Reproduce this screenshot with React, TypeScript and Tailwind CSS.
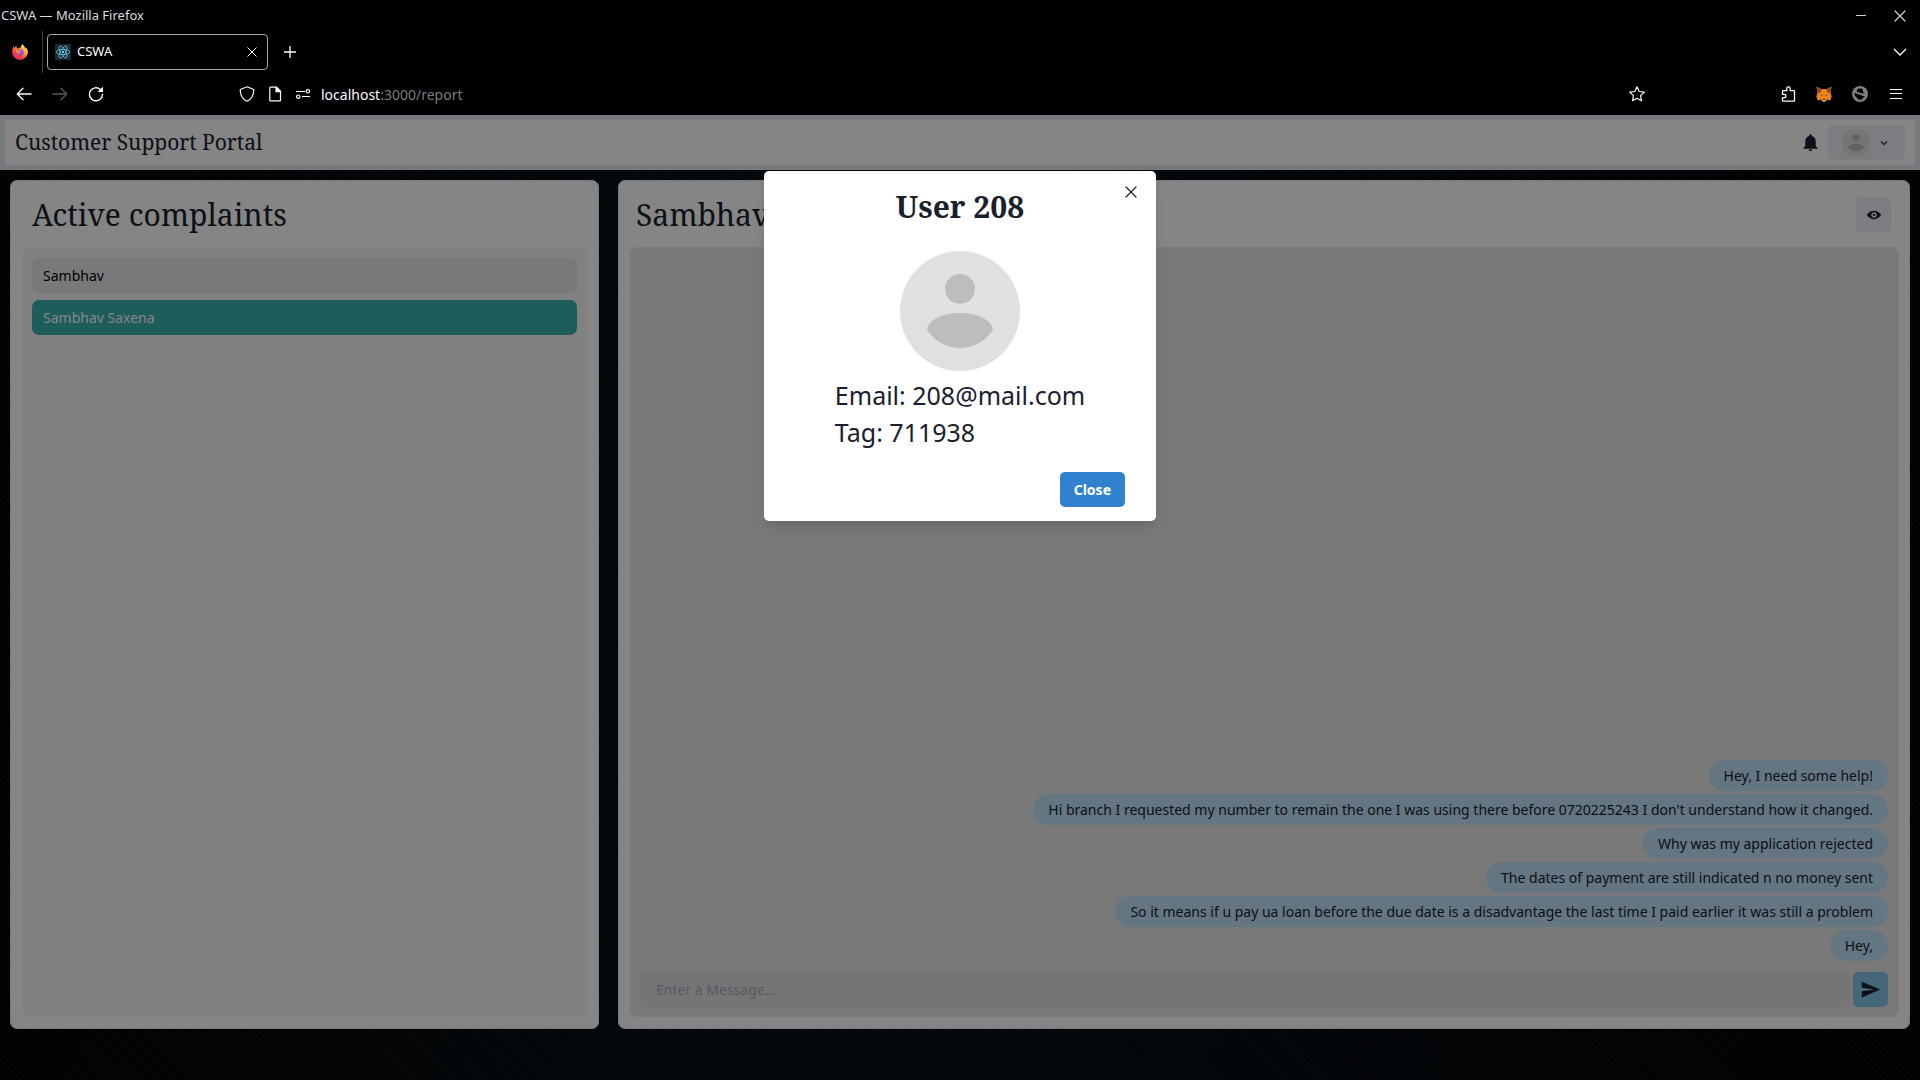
import React from "react";

const messages = [
  "Hey, I need some help!",
  "Hi branch I requested my number to remain the one I was using there before 0720225243 I don't understand how it changed.",
  "Why was my application rejected",
  "The dates of payment are still indicated n no money sent",
  "So it means if u pay ua loan before the due date is a disadvantage the last time I paid earlier it was still a problem",
  "Hey,",
];

const complaints = [
  { name: "Sambhav", active: false },
  { name: "Sambhav Saxena", active: true },
];

type IconProps = { className?: string };

function Cross({ className }: IconProps) {
  return (
    <svg viewBox="0 0 12 12" className={className} fill="none" stroke="currentColor" strokeWidth="1.200" strokeLinecap="round" aria-hidden="true">
      <path d="M1 1l10 10M11 1L1 11" />
    </svg>
  );
}

function FirefoxLogo() {
  return (
    <svg viewBox="0 0 16 16" className="size-4" aria-hidden="true">
      <defs>
        <linearGradient id="ff-body" x1="0.85" y1="0.1" x2="0.2" y2="0.95">
          <stop offset="0" stopColor="#fff44f" />
          <stop offset="0.35" stopColor="#ffa02e" />
          <stop offset="0.65" stopColor="#ff4a3d" />
          <stop offset="1" stopColor="#e31587" />
        </linearGradient>
        <radialGradient id="ff-globe" cx="0.6" cy="0.3" r="0.8">
          <stop offset="0" stopColor="#b65cf5" />
          <stop offset="1" stopColor="#5b3bd1" />
        </radialGradient>
      </defs>
      <path
        fill="url(#ff-body)"
        d="M15.3 5.6c-.3-.9-1-1.7-1.7-2 .4.9.6 1.500.6 1.900C13.3 3.400 11.700 2.300 10.700.3c-.9.5-1.900 1.800-1.700 3.300-1.200.1-2.400.5-3.200 1.100C5 4.500 4.300 3.400 4.500 2.100c-1 .5-1.600 1.200-2 1.800C2 3.700 2 2.200 2 1.900.9 3 .2 5.700.2 8c0 4.300 3.400 7.800 7.800 7.800s7.800-3.500 7.800-7.800c0-.9-.2-1.700-.5-2.400z"
      />
      <circle cx="8.300" cy="8.200" r="3.300" fill="url(#ff-globe)" />
      <path fill="#ff8a2a" d="M3.800 6.300c1-.7 2.200-.5 2.900 0 .9 0 1.800 0 1.900.4 0 .5-1.500 1-1.700 1.500-.2.800.7 1.500 2 1.300-1.200 1.600-4.200.9-5.100-3.200z" />
    </svg>
  );
}

function ReactFavicon() {
  return (
    <svg viewBox="0 0 16 16" className="size-4" fill="none" stroke="#61dafb" strokeWidth="0.700" aria-hidden="true">
      <rect width="16" height="16" rx="1" fill="#23272f" stroke="none" />
      <ellipse cx="8" cy="8" rx="6.800" ry="2.600" />
      <ellipse cx="8" cy="8" rx="6.800" ry="2.600" transform="rotate(60 8 8)" />
      <ellipse cx="8" cy="8" rx="6.800" ry="2.600" transform="rotate(120 8 8)" />
      <circle cx="8" cy="8" r="1.200" fill="#61dafb" stroke="none" />
    </svg>
  );
}

function FoxIcon() {
  return (
    <svg viewBox="0 0 16 16" className="size-4" aria-hidden="true">
      <path fill="#e8821e" d="M.5.8L6 3.200h4L15.500.8l-.9 6.200 1 3.500-1.300 4-3.300-.8-1.500 1.700h-3L5 13.700l-3.300.8-1.300-4 1-3.500z" />
      <path fill="#8f4a1f" d="M.5.8L6 3.400 4.700 6.600 1.300 6.800zM15.500.8L10 3.400l1.300 3.200 3.400.2z" />
      <path fill="#f5841f" d="M6 3.200h4l1.300 3.500L14 10.500l-3.500.5L8 12.500 5.500 11l-3.500-.5 2.700-3.800z" />
      <path fill="#3b2a20" d="M4.300 8.800l2 .2.300 1.200zM11.700 8.800l-2 .2-.3 1.200zM6.800 13h2.400l.2 1H6.600z" />
      <path fill="#cdbdb2" d="M6.300 14h3.400l-.7 1.400H7z" />
    </svg>
  );
}

function BlockedIcon() {
  return (
    <svg viewBox="0 0 16 16" className="size-4" aria-hidden="true">
      <circle cx="8" cy="8" r="8" fill="#808080" />
      <path fill="#000" d="M4.700 5.700C5.200 3 6.300 2 7.300 2.500c.5.300.9.300 1.400 0 1-.5 2.100.500 2.500 2.800l.3 2.100c.7.200 1.300.5 1.700.9z" />
      <path fill="#000" d="M2.500 6.700l10.800 4c-.6.400-1.300.6-2 .7-.7 1.400-1.800 2.400-3.300 2.400s-2.700-1-3.300-2.500C3.200 10.600 2.300 9 2.500 6.700z" />
      <path stroke="#808080" strokeWidth="1.200" d="M2 5.600l12 4.600" />
    </svg>
  );
}

function Avatar({ className }: IconProps) {
  return (
    <svg viewBox="0 0 120 120" className={className} role="img" aria-label="User avatar">
      <circle cx="60" cy="60" r="60" fill="#e0e0e0" />
      <circle cx="60" cy="38" r="15" fill="#bdbdbd" />
      <path fill="#bdbdbd" d="M27.500 76.500C30 69 42 62 60 62s30 7 32.500 14.500c1 2-.5 3.500-1.500 5C83.500 91.500 72 97 60 97s-23.500-5.500-31-15.500c-1-1.500-2.500-3-1.500-5z" />
    </svg>
  );
}

function BrowserChrome() {
  return (
    <header className="bg-black text-[#fbfbfe]">
      <div className="flex h-[31px] items-center justify-between pr-[14px] pl-px">
        <span className="text-[13px] text-[#dcdcdc]">CSWA — Mozilla Firefox</span>
        <div className="flex items-center gap-7 text-[#d0d0d0]">
          <button aria-label="Minimize" className="flex h-3 w-3 items-center justify-end">
            <span className="h-px w-[10px] bg-[#d0d0d0]" />
          </button>
          <button aria-label="Close window">
            <Cross className="size-3" />
          </button>
        </div>
      </div>

      <div className="flex h-[42px] items-center pr-[13px]">
        <button aria-label="Firefox View" className="flex h-full w-[43px] items-center border-r border-[#3a3a3a] pl-3">
          <FirefoxLogo />
        </button>
        <div className="ml-1 flex h-9 w-[221px] items-center rounded border border-[#a8a8a8] px-[7px]">
          <ReactFavicon />
          <span className="ml-[6px] flex-1 text-[13px]">CSWA</span>
          <button aria-label="Close tab" className="pr-[3px]">
            <Cross className="size-[10px]" />
          </button>
        </div>
        <button aria-label="New tab" className="ml-4">
          <svg viewBox="0 0 12 12" className="size-3" stroke="currentColor" strokeWidth="1.300" aria-hidden="true">
            <path d="M6 0v12M0 6h12" />
          </svg>
        </button>
        <button aria-label="List all tabs" className="ml-auto">
          <svg viewBox="0 0 14 8" className="h-2 w-[14px]" fill="none" stroke="currentColor" strokeWidth="1.300" aria-hidden="true">
            <path d="M1 1l6 6 6-6" />
          </svg>
        </button>
      </div>

      <div className="flex h-[42px] items-center pr-4 pl-4">
        <div className="flex items-center gap-5">
          <button aria-label="Back">
            <svg viewBox="0 0 16 16" className="size-4" fill="none" stroke="currentColor" strokeWidth="1.300" strokeLinecap="round" aria-hidden="true">
              <path d="M15 8H1.500M7 2.300L1.300 8 7 13.700" />
            </svg>
          </button>
          <button aria-label="Forward" className="text-[#5a5a5c]">
            <svg viewBox="0 0 16 16" className="size-4" fill="none" stroke="currentColor" strokeWidth="1.300" strokeLinecap="round" aria-hidden="true">
              <path d="M1 8h13.500M9 2.300L14.700 8 9 13.700" />
            </svg>
          </button>
          <button aria-label="Reload">
            <svg viewBox="0 0 16 16" className="size-4" fill="none" stroke="currentColor" strokeWidth="1.400" strokeLinecap="round" aria-hidden="true">
              <path d="M14.500 8.500a6.500 6.500 0 1 1-2.200-5.100" />
              <path d="M9.500 6H15V.8z" fill="currentColor" stroke="none" />
            </svg>
          </button>
        </div>
        <div className="ml-[135px] flex flex-1 items-center">
          <div className="flex items-center gap-3">
            <svg viewBox="0 0 16 16" className="size-4" fill="none" stroke="currentColor" strokeWidth="1.200" aria-hidden="true">
              <path d="M8 .8L14.200 3.300c.5.200.6.500.6.800C14.600 9.500 12.500 13.500 8 15.300 3.500 13.500 1.400 9.500 1.200 4.100c0-.3.100-.6.600-.8z" />
            </svg>
            <svg viewBox="0 0 16 16" className="size-4" fill="none" stroke="currentColor" strokeWidth="1.200" strokeLinejoin="round" aria-hidden="true">
              <path d="M3.500 1.200h6l4 4v9c0 .4-.3.700-.7.700H3.500c-.4 0-.7-.3-.7-.7V1.900c0-.4.3-.7.700-.7z" />
              <path d="M9 1.200v4.500h4.500z" fill="currentColor" />
            </svg>
            <svg viewBox="0 0 16 16" className="size-4" fill="none" stroke="currentColor" strokeWidth="1.200" aria-hidden="true">
              <path d="M1 5.500h9M7 10.500h8" />
              <circle cx="12.800" cy="5.300" r="1.700" />
              <circle cx="3.200" cy="10.700" r="1.700" />
            </svg>
          </div>
          <span className="ml-[10px] text-[14px] text-[#7b7b7e]">
            <span className="text-[#fbfbfe]">localhost</span>:3000/report
          </span>
        </div>
        <button aria-label="Bookmark this page" className="mr-[135px]">
          <svg viewBox="0 0 16 16" className="size-4" fill="none" stroke="currentColor" strokeWidth="1.200" strokeLinejoin="round" aria-hidden="true">
            <path d="M8 .8l2.200 4.700 5.100.6-3.800 3.500 1 5.100L8 12.200l-4.500 2.500 1-5.100L.7 6.100l5.100-.6z" />
          </svg>
        </button>
        <div className="flex items-center gap-5">
          <button aria-label="Extensions">
            <svg viewBox="0 0 16 16" className="size-4" fill="none" stroke="currentColor" strokeWidth="1.300" strokeLinejoin="round" aria-hidden="true">
              <path d="M3.200 4.700h3.600V2.500c0-1 .7-1.700 1.700-1.700s1.700.7 1.700 1.700v2.200h3.600c.4 0 .7.300.7.700v9c0 .4-.3.700-.7.700H3.200c-.4 0-.7-.3-.7-.7v-2.700h1.700c1 0 1.700-.7 1.700-1.700s-.7-1.700-1.700-1.700H2.500V5.400c0-.4.300-.7.700-.7z" />
            </svg>
          </button>
          <button aria-label="Wallet"><FoxIcon /></button>
          <button aria-label="Tracking blocker"><BlockedIcon /></button>
          <button aria-label="Open application menu" className="px-0.5">
            <svg viewBox="0 0 12 12" className="size-3" fill="currentColor" aria-hidden="true">
              <path d="M0 1h12v1H0zM0 5h12v1H0zM0 10h12v1H0z" />
            </svg>
          </button>
        </div>
      </div>
    </header>
  );
}

function PortalHeader() {
  return (
    <div className="flex h-[55px] items-center justify-between border-[5px] border-[#e2e8f0] bg-white px-[10px]">
      <h1 className="pt-px font-['Noto_Serif','DejaVu_Serif',serif] text-[21px]">Customer Support Portal</h1>
      <div className="flex items-center gap-[7px]">
        <button aria-label="Notifications">
          <svg viewBox="0 0 24 24" className="size-[21px]" fill="currentColor" aria-hidden="true">
            <path d="M12 22c1.100 0 2-.9 2-2h-4c0 1.100.89 2 2 2zm6-6v-5c0-3.070-1.640-5.640-4.500-6.320V4c0-.83-.67-1.500-1.500-1.500s-1.500.67-1.500 1.500v.68C7.630 5.360 6 7.920 6 11v5l-2 2v1h16v-1l-2-2z" />
          </svg>
        </button>
        <button aria-label="Account menu" className="flex h-[35px] items-center gap-[7px] rounded-[5px] bg-[#edeef7] px-[14px]">
          <Avatar className="size-7" />
          <svg viewBox="0 0 24 24" className="size-[14px]" fill="currentColor" aria-hidden="true">
            <path d="M16.590 8.590L12 13.170 7.410 8.590 6 10l6 6 6-6z" />
          </svg>
        </button>
      </div>
    </div>
  );
}

function ComplaintsCard() {
  return (
    <section className="flex w-[31%] flex-col rounded-[7px] border border-[#e2e8f0] bg-white p-[11px]">
      <h2 className="mb-[10px] flex h-[45px] items-center px-[10px] font-['Noto_Serif','DejaVu_Serif',serif] text-[30px]">
        Active complaints
      </h2>
      <ul className="flex flex-1 flex-col gap-[7px] rounded-[7px] bg-[#f8f8f8] px-[10px] py-[11px]">
        {complaints.map((c) => (
          <li key={c.name}>
            <button
              className={
                c.active
                  ? "flex h-[35px] w-full items-center rounded-[7px] bg-[#38b2ac] px-[11px] text-[14px] text-white"
                  : "flex h-[35px] w-full items-center rounded-[7px] bg-[#e8e8e8] px-[11px] text-[14px] text-black"
              }
            >
              {c.name}
            </button>
          </li>
        ))}
      </ul>
    </section>
  );
}

function ChatCard() {
  return (
    <section className="flex w-[68%] flex-col rounded-[7px] border border-[#e2e8f0] bg-white py-[11px] pr-[10px] pl-[11px]">
      <div className="mb-[10px] flex h-[45px] items-center justify-between pr-2 pl-[6px]">
        <h2 className="font-['Noto_Serif','DejaVu_Serif',serif] text-[30px]">Sambhav Saxena</h2>
        <button aria-label="View user" className="flex size-[35px] items-center justify-center rounded-[5px] bg-[#edeef7]">
          <svg viewBox="0 0 24 24" className="size-[14px]" fill="currentColor" aria-hidden="true">
            <path d="M23.432,10.524C20.787,7.614,16.4,4.538,12,4.6,7.6,4.537,3.213,7.615.568,10.524a2.211,2.211,0,0,0,0,2.948C3.182,16.351,7.507,19.4,11.839,19.4h.308c4.347,0,8.671-3.049,11.288-5.929A2.21,2.21,0,0,0,23.432,10.524ZM7.4,12A4.6,4.6,0,1,1,12,16.6,4.6,4.6,0,0,1,7.4,12Z" />
            <circle cx="12.020" cy="12" r="2" />
          </svg>
        </button>
      </div>
      <div className="flex flex-1 flex-col justify-end rounded-[7px] bg-[#e8e8e8] py-[10px] pr-[11px] pl-[10px]">
        <ul className="flex flex-col items-end gap-[3px] pb-[11px]">
          {messages.map((m) => (
            <li key={m} className="rounded-[18px] bg-[#bee3f8] px-[15px] py-[5px] text-[14px] leading-[21px]">
              {m}
            </li>
          ))}
        </ul>
        <form className="flex gap-[3px]">
          <input
            type="text"
            aria-label="Message"
            placeholder="Enter a Message..."
            className="h-[35px] min-w-0 flex-1 rounded-[5px] bg-[#e0e0e0] px-4 text-[14px] placeholder:text-[#a0aec0]"
          />
          <button type="button" aria-label="Send message" className="flex size-[35px] items-center justify-center rounded-[5px] bg-[#82c6e8]">
            <svg viewBox="0 0 24 24" className="size-[21px]" fill="currentColor" aria-hidden="true">
              <path d="M2.010 21L23 12 2.010 3 2 10l15 2-15 2z" />
            </svg>
          </button>
        </form>
      </div>
    </section>
  );
}

function UserDialog() {
  return (
    <div
      role="dialog"
      aria-modal="true"
      aria-labelledby="user-title"
      className="relative w-[392px] rounded-[5px] bg-white shadow-[0_10px_15px_-3px_rgba(0,0,0,0.1),0_4px_6px_-2px_rgba(0,0,0,0.05)]"
    >
      <h2 id="user-title" className="pt-[15px] text-center font-['Noto_Serif','DejaVu_Serif',serif] text-[30px] leading-[42px] font-bold">
        User 208
      </h2>
      <button aria-label="Close dialog" className="absolute top-[7px] right-[11px] flex size-7 items-center justify-center">
        <Cross className="size-3" />
      </button>
      <div className="flex flex-col items-center pt-[23px]">
        <Avatar className="size-[120px]" />
        <div className="pt-[6px] text-[25px] leading-[37px]">
          <p>Email: 208@mail.com</p>
          <p>Tag: 711938</p>
        </div>
      </div>
      <div className="flex justify-end px-[31px] pt-[21px] pb-[14px]">
        <button className="h-[35px] rounded-[5px] bg-[#3182ce] px-[14px] text-[14px] font-bold text-white">Close</button>
      </div>
    </div>
  );
}

export default function App() {
  return (
    <div className="flex min-h-screen flex-col bg-black font-['Noto_Sans',sans-serif] text-[#1a202c]">
      <BrowserChrome />
      <div className="relative flex flex-1 flex-col bg-[repeating-linear-gradient(45deg,transparent_0_2px,rgba(70,85,95,0.14)_2px_3px),linear-gradient(90deg,#020203_0%,#050709_18%,#050f17_34%,#050e16_55%,#030609_80%,#010103_100%)]">
        <PortalHeader />
        <main className="flex flex-1 justify-between px-[10px] pt-[10px] pb-[51px]">
          <ComplaintsCard />
          <ChatCard />
        </main>
        <div className="absolute inset-0 flex items-start justify-center bg-black/48 pt-14">
          <UserDialog />
        </div>
      </div>
    </div>
  );
}
